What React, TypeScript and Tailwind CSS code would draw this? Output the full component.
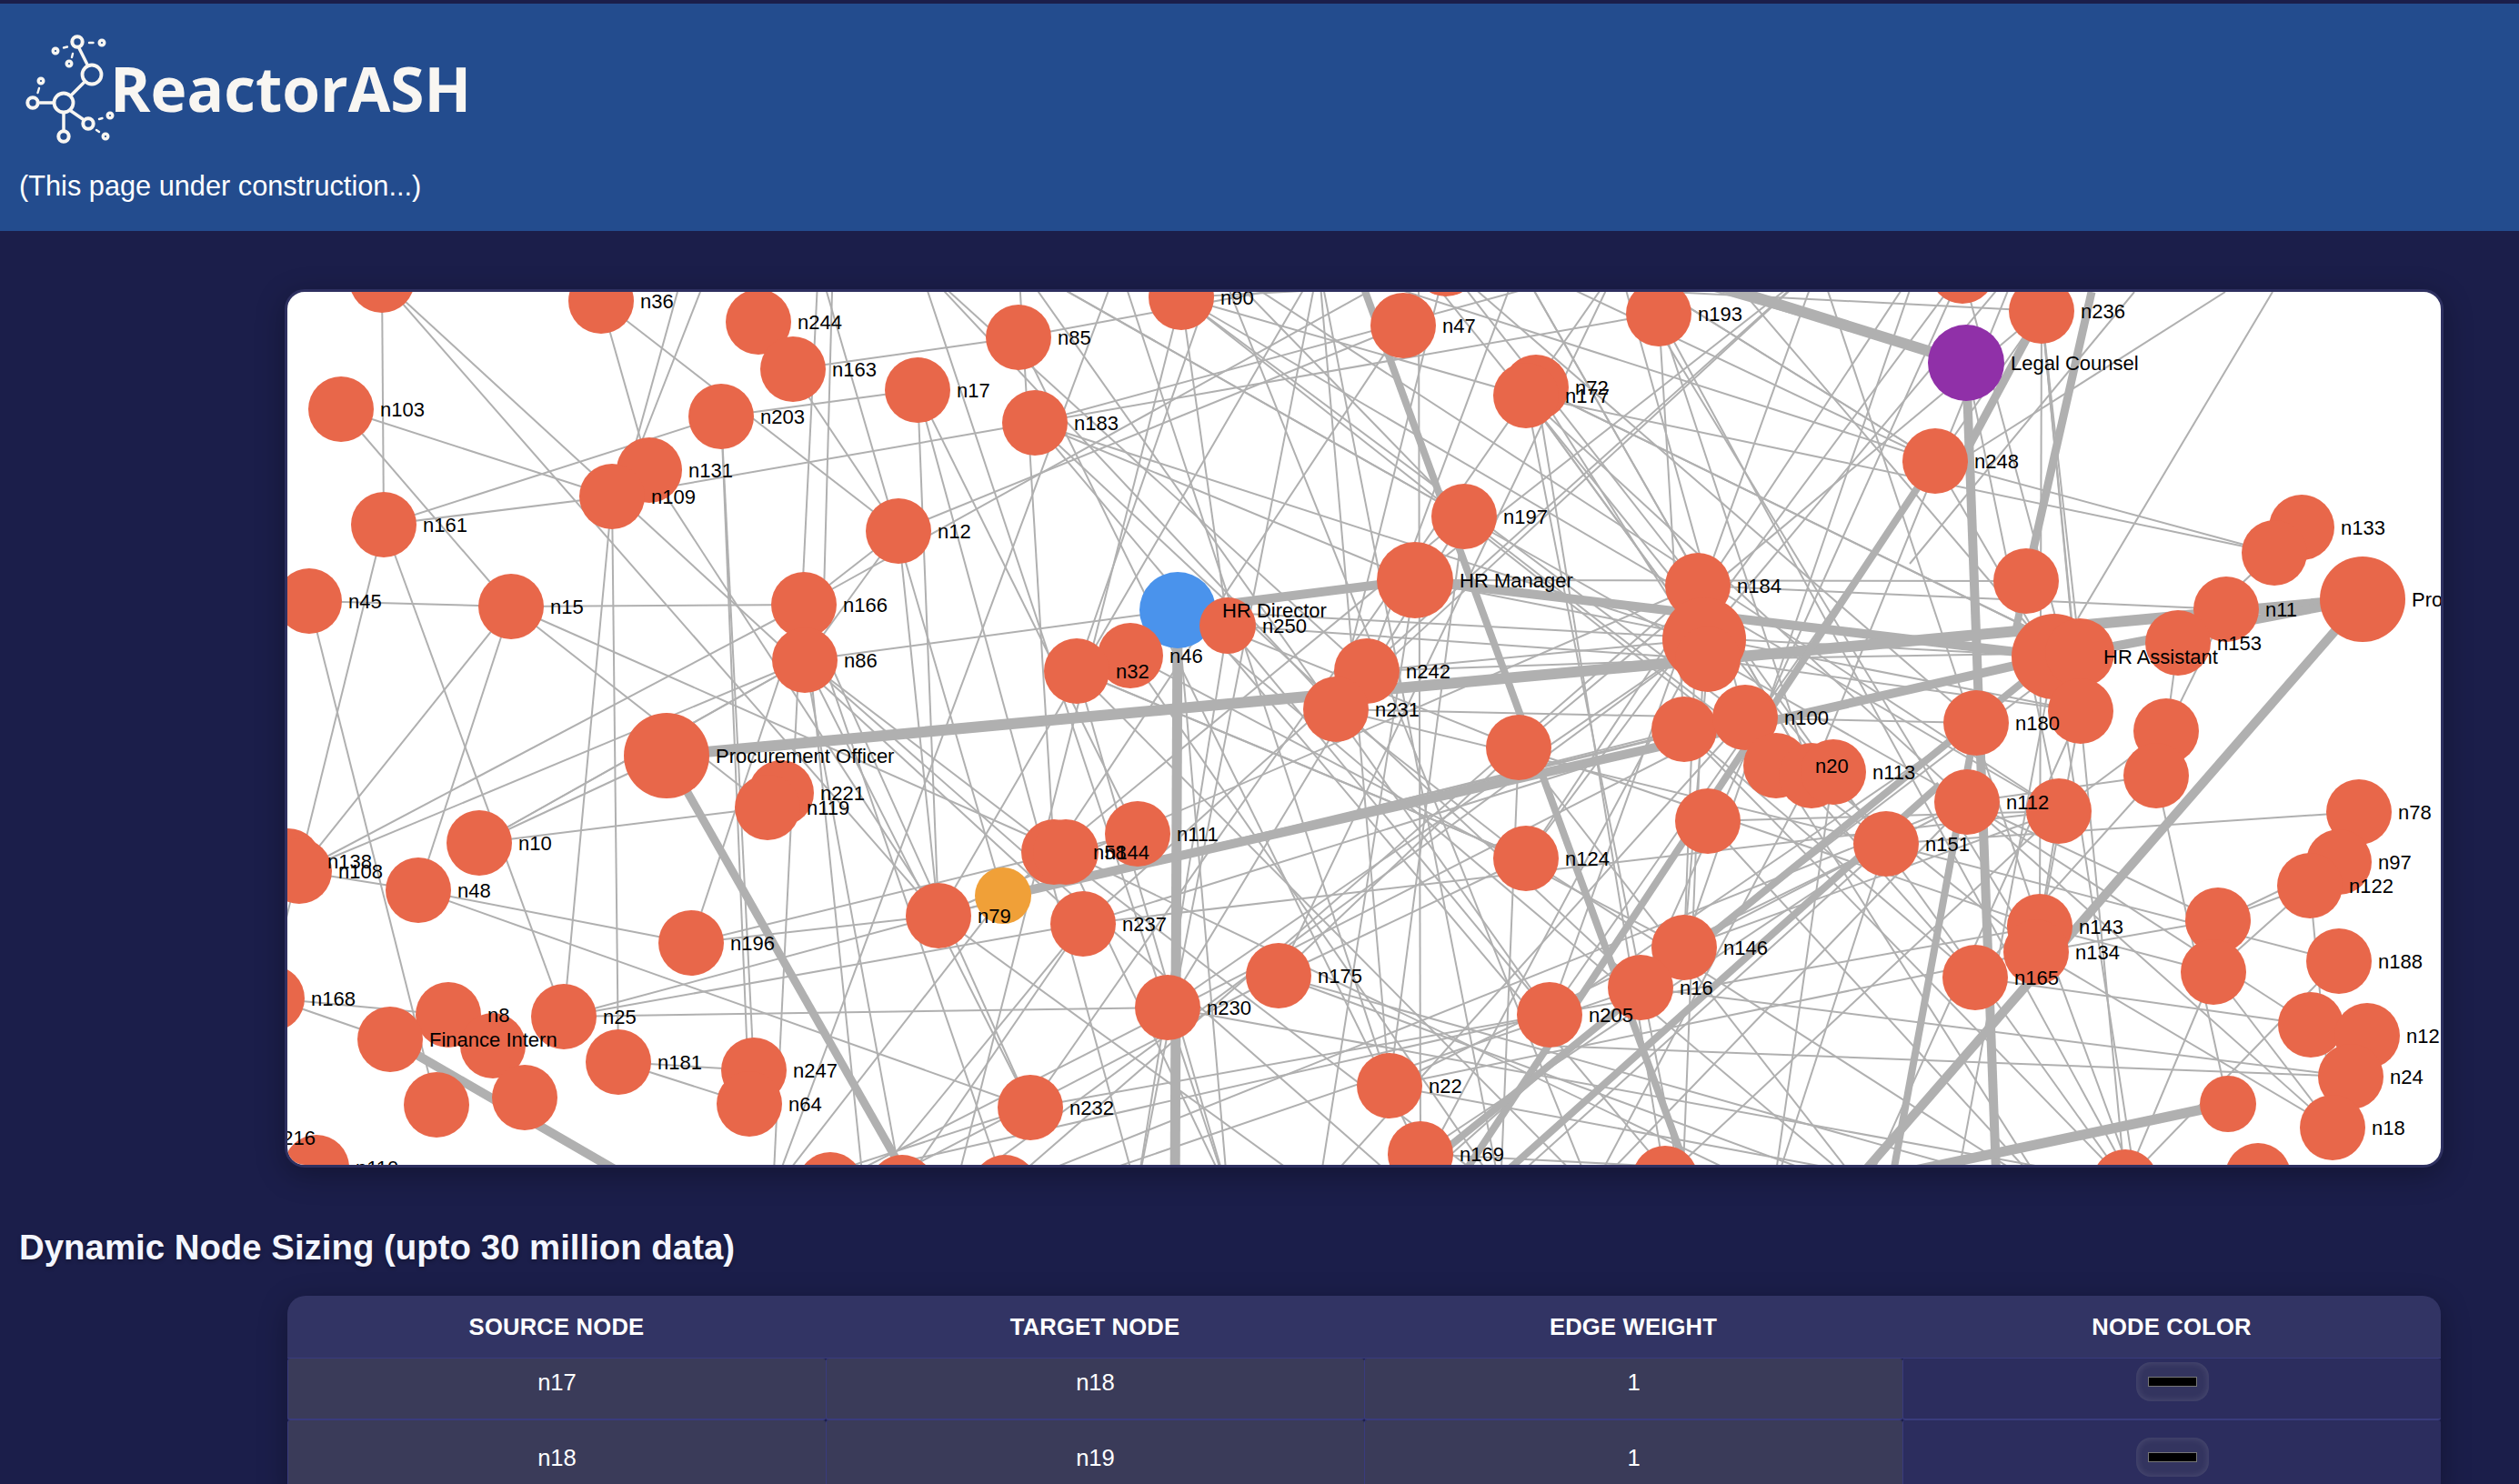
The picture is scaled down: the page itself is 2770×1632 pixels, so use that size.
import React from "react";

type GraphNode = { id: string; x: number; y: number; r?: number; color?: string; label?: string };

const ORANGE = "#e8674a";
const EDGE = "#b0b0b0";

const nodes: GraphNode[] = [
  { id: "u0", x: 420, y: 308 },
  { id: "n36", x: 661, y: 331 },
  { id: "n244", x: 834, y: 354 },
  { id: "n163", x: 872, y: 406 },
  { id: "n103", x: 375, y: 450 },
  { id: "n203", x: 793, y: 458 },
  { id: "n17", x: 1009, y: 429 },
  { id: "n131", x: 714, y: 517 },
  { id: "n109", x: 673, y: 546 },
  { id: "n161", x: 422, y: 577 },
  { id: "n12", x: 988, y: 584 },
  { id: "n45", x: 340, y: 661 },
  { id: "n15", x: 562, y: 667 },
  { id: "n166", x: 884, y: 665 },
  { id: "n86", x: 885, y: 726 },
  { id: "n85", x: 1120, y: 371 },
  { id: "n183", x: 1138, y: 465 },
  { id: "n90", x: 1299, y: 327 },
  { id: "n47", x: 1543, y: 358 },
  { id: "u1", x: 1590, y: 290 },
  { id: "n193", x: 1824, y: 345 },
  { id: "n72", x: 1689, y: 426 },
  { id: "n177", x: 1678, y: 435 },
  { id: "n197", x: 1610, y: 568 },
  { id: "hrm", x: 1556, y: 638, r: 42, label: "HR Manager" },
  { id: "n184", x: 1867, y: 644 },
  { id: "hrd", x: 1295, y: 671, r: 42, color: "#4a93ec", label: "HR Director" },
  { id: "n250", x: 1350, y: 688, r: 31 },
  { id: "n46", x: 1243, y: 721 },
  { id: "n32", x: 1184, y: 738 },
  { id: "n242", x: 1503, y: 738 },
  { id: "n231", x: 1469, y: 780 },
  { id: "u2", x: 1874, y: 703, r: 46 },
  { id: "u3", x: 1878, y: 725 },
  { id: "u4", x: 1670, y: 822 },
  { id: "u5", x: 1852, y: 802 },
  { id: "n100", x: 1919, y: 789 },
  { id: "u6", x: 2158, y: 298 },
  { id: "n236", x: 2245, y: 342 },
  { id: "legal", x: 2162, y: 399, r: 42, color: "#9030a8", label: "Legal Counsel" },
  { id: "n248", x: 2128, y: 507 },
  { id: "u7", x: 2228, y: 639 },
  { id: "n133", x: 2531, y: 580 },
  { id: "u8", x: 2501, y: 608 },
  { id: "pm", x: 2598, y: 659, r: 47, label: "Procurement Manager" },
  { id: "n11", x: 2448, y: 670 },
  { id: "n153", x: 2395, y: 707 },
  { id: "hra", x: 2259, y: 722, r: 47, label: "HR Assistant" },
  { id: "u9", x: 2287, y: 718, r: 38 },
  { id: "u10", x: 2288, y: 782 },
  { id: "n180", x: 2173, y: 795 },
  { id: "u11", x: 2382, y: 804 },
  { id: "u12", x: 2371, y: 853 },
  { id: "n20", x: 1953, y: 842 },
  { id: "u13", x: 1992, y: 853 },
  { id: "n113", x: 2016, y: 849 },
  { id: "n112", x: 2163, y: 882 },
  { id: "u14", x: 2264, y: 892 },
  { id: "n151", x: 2074, y: 928 },
  { id: "n78", x: 2594, y: 893 },
  { id: "n97", x: 2572, y: 948 },
  { id: "n122", x: 2540, y: 974 },
  { id: "n143", x: 2243, y: 1019 },
  { id: "n134", x: 2239, y: 1047 },
  { id: "n165", x: 2172, y: 1075 },
  { id: "u15", x: 2439, y: 1012 },
  { id: "u16", x: 2434, y: 1069 },
  { id: "n188", x: 2572, y: 1057 },
  { id: "u17", x: 2541, y: 1127 },
  { id: "n12x", x: 2603, y: 1139, label: "n12" },
  { id: "n24", x: 2585, y: 1184 },
  { id: "n18", x: 2565, y: 1240 },
  { id: "u18", x: 2450, y: 1214, r: 31 },
  { id: "u19", x: 2337, y: 1300 },
  { id: "u20", x: 2483, y: 1293 },
  { id: "n124", x: 1678, y: 944 },
  { id: "u21", x: 1878, y: 903 },
  { id: "n146", x: 1852, y: 1042 },
  { id: "n16", x: 1804, y: 1086 },
  { id: "n205", x: 1704, y: 1116 },
  { id: "n22", x: 1528, y: 1194 },
  { id: "n169", x: 1562, y: 1269 },
  { id: "u22", x: 1831, y: 1296 },
  { id: "n111", x: 1251, y: 917 },
  { id: "n58", x: 1159, y: 937 },
  { id: "n144", x: 1172, y: 937 },
  { id: "n237", x: 1191, y: 1016 },
  { id: "n175", x: 1406, y: 1073 },
  { id: "n230", x: 1284, y: 1108 },
  { id: "n232", x: 1133, y: 1218 },
  { id: "po", x: 733, y: 831, r: 47, label: "Procurement Officer" },
  { id: "n221", x: 859, y: 872 },
  { id: "n119", x: 844, y: 888 },
  { id: "n10", x: 527, y: 927 },
  { id: "n48", x: 460, y: 979 },
  { id: "n138", x: 317, y: 947 },
  { id: "n108", x: 329, y: 958 },
  { id: "n196", x: 760, y: 1037 },
  { id: "n79", x: 1032, y: 1007 },
  { id: "n79o", x: 1103, y: 985, r: 31, color: "#f0a038", label: "" },
  { id: "n168", x: 299, y: 1098 },
  { id: "n8", x: 493, y: 1116 },
  { id: "u23", x: 542, y: 1150 },
  { id: "fi", x: 429, y: 1143, label: "Finance Intern" },
  { id: "n25", x: 620, y: 1118 },
  { id: "n181", x: 680, y: 1168 },
  { id: "n247", x: 829, y: 1177 },
  { id: "n64", x: 824, y: 1214 },
  { id: "u24", x: 480, y: 1215 },
  { id: "u25", x: 577, y: 1207 },
  { id: "n216", x: 255, y: 1251 },
  { id: "n110", x: 348, y: 1284 },
  { id: "u26", x: 913, y: 1303 },
  { id: "u27", x: 992, y: 1306 },
  { id: "u28", x: 1105, y: 1306 },
];

const byId = Object.fromEntries(nodes.map((n) => [n.id, n]));

// the heavy links, read off the picture: x1, y1, x2, y2, width
const thickLines: number[][] = [
  [1295, 671, 1556, 638, 10],
  [1556, 638, 2259, 722, 10],
  [733, 831, 2598, 659, 12],
  [1295, 671, 1292, 1320, 11],
  [1105, 985, 2259, 722, 10],
  [2162, 399, 1700, 255, 12],
  [2162, 399, 2195, 1290, 10],
  [1490, 290, 1860, 1300, 8],
  [2245, 342, 2160, 500, 9],
  [2128, 507, 1610, 1290, 8],
  [2300, 321, 2228, 639, 9],
  [2228, 639, 2215, 700, 8],
  [2598, 659, 2040, 1300, 10],
  [2173, 795, 2080, 1300, 8],
  [2259, 722, 1550, 1296, 8],
  [2133, 863, 1649, 1295, 8],
  [429, 1143, 700, 1300, 10],
  [733, 831, 1000, 1300, 9],
  [2450, 1214, 1950, 1320, 11],
  [2287, 718, 2598, 659, 10],
];

// light links in the sparse left and right parts, kept by hand
const handLinks =
  "n103-n109 n103-n15 u0-n161 u0-n79 u0-n237 n161-n203 n161-n109 n109-n183 n45-n15 n15-n166 n166-n232 n163-n85 n203-n17 n36-n131 n36-n12 n244-n12 n10-n119 n48-n196 n48-n232 n10-po n108-n48 n108-n86 n108-n166 n108-n15 n168-n8 n168-fi n25-n79 n25-n237 n25-n230 n181-n247 n181-n64 n196-n79 n196-n111 n196-n166 n10-n86 n109-n181 n109-n25 n203-n247 n203-n64 n131-n79 n12-n86 n12-n166 n15-n119 n15-n144 n86-n10 n161-n25 n45-u24 n15-n48 n161-n216 n78-n151 n97-u15 n122-u15 n122-n18 n122-u16 u15-n134 u17-n165 n18-n134 u16-n18 u8-n248 n177-u8 n184-n11 u8-n153 n11-u11 n153-u11 u11-u14 u12-n112 u12-n165 u15-n112 u16-n143 n188-u19 n188-n151 n24-n16 u17-n112 u12-u18 u16-u19 n18-n112 u14-n143";

// the middle of the graph is a thick tangle, a seeded walk fills it in
const seededLinks = () => {
  let seed = 4711;
  const rnd = () => {
    seed = (seed * 16807) % 2147483647;
    return seed / 2147483647;
  };
  const pool: { x: number; y: number }[] = nodes.filter((n) => n.x > 880 && n.x < 2340);
  for (let x = 900; x <= 2300; x += 110) pool.push({ x, y: 290 });
  for (let x = 850; x <= 2400; x += 100) pool.push({ x, y: 1310 });
  const out: number[][] = [];
  while (out.length < 200) {
    const a = pool[Math.floor(rnd() * pool.length)];
    const b = pool[Math.floor(rnd() * pool.length)];
    const d = Math.hypot(a.x - b.x, a.y - b.y);
    if (d > 260 && d < 1150) out.push([a.x, a.y, b.x, b.y]);
  }
  return out;
};

const thinLines: number[][] = [
  ...handLinks.split(" ").map((pair) => {
    const [a, b] = pair.split("-");
    return [byId[a].x, byId[a].y, byId[b].x, byId[b].y];
  }),
  ...seededLinks(),
  [770, 321, 700, 500],
  [745, 321, 690, 520],
  [915, 321, 905, 690],
  [2499, 321, 2285, 680],
  [2447, 321, 2170, 497],
  [2347, 321, 2100, 620],
  [2585, 1184, 1700, 1150],
];

const rows = [
  { source: "n17", target: "n18", pad: "pt-[11px]", pillPad: "pt-1", h: "h-[68px]" },
  { source: "n18", target: "n19", pad: "pt-[26px]", pillPad: "pt-[19px]", h: "h-[82px]" },
];

const textCell = "rounded-[3px] border-b-2 border-l border-[#393b7d] bg-[#3a3b59] leading-[30px]";

function LogoMark() {
  const hollow = "fill-none stroke-[#f8f6f2]";
  return (
    <svg viewBox="24 38 104 122" className="h-[122px] w-[104px] shrink-0" strokeLinecap="round">
      <path
        d="M87 53L96 71M93 90L78 105M58 113H44M70 125V143M78 122L91 131"
        stroke="#f8f6f2"
        strokeWidth="3.5"
      />
      <path
        d="M70 52.5L74 51.5M80 59L79 63M98 47H102.5M43 97L41.5 102M109 131L112.5 130M106 143L109 145"
        stroke="#f8f6f2"
        strokeWidth="2.4"
      />
      <circle cx="101" cy="82" r="10.5" strokeWidth="3.8" className={hollow} />
      <circle cx="70" cy="113" r="10.5" strokeWidth="3.8" className={hollow} />
      <circle cx="85" cy="46" r="5.7" strokeWidth="4" className={hollow} />
      <circle cx="36" cy="113" r="5.7" strokeWidth="4" className={hollow} />
      <circle cx="70" cy="150" r="5.7" strokeWidth="4" className={hollow} />
      <circle cx="97" cy="136" r="5.7" strokeWidth="4" className={hollow} />
      <circle cx="61" cy="56" r="2.8" strokeWidth="3.4" className={hollow} />
      <circle cx="76" cy="70" r="2.8" strokeWidth="3.4" className={hollow} />
      <circle cx="112" cy="47" r="2.8" strokeWidth="3.4" className={hollow} />
      <circle cx="45" cy="89" r="2.8" strokeWidth="3.4" className={hollow} />
      <circle cx="121" cy="127" r="2.8" strokeWidth="3.4" className={hollow} />
      <circle cx="116" cy="150" r="2.8" strokeWidth="3.4" className={hollow} />
    </svg>
  );
}

function NetworkGraph() {
  return (
    <svg viewBox="316 321 2368 960" className="block h-[960px] w-[2368px]">
      <g stroke={EDGE} strokeWidth="2">
        {thinLines.map(([x1, y1, x2, y2], i) => (
          <line key={i} x1={x1} y1={y1} x2={x2} y2={y2} />
        ))}
      </g>
      <g stroke={EDGE}>
        {thickLines.map(([x1, y1, x2, y2, w], i) => (
          <line key={i} x1={x1} y1={y1} x2={x2} y2={y2} strokeWidth={w} />
        ))}
      </g>
      {nodes.map((n) => (
        <circle key={n.id} cx={n.x} cy={n.y} r={n.r ?? 36} fill={n.color ?? ORANGE} />
      ))}
      <g fill="#000" fontSize="22" fontFamily="'Liberation Sans', Arial, sans-serif">
        {nodes.map((n) => (
          <text key={n.id} x={n.x + (n.r ?? 36) + 7} y={n.y} dominantBaseline="central">
            {n.label ?? (n.id.startsWith("n") ? n.id : "")}
          </text>
        ))}
      </g>
    </svg>
  );
}

export default function App() {
  return (
    <div className="h-[1632px] overflow-hidden bg-[#1b1e4a] pt-1 font-['Liberation_Sans',Arial,sans-serif] text-white">
      <header className="h-[250px] bg-[#234c8e] pl-[21px] pt-[34px]">
        <div className="flex items-start">
          <div className="ml-[3px]">
            <LogoMark />
          </div>
          <span className="-ml-[7px] mt-[14px] font-['Open_Sans',sans-serif] text-[67.5px] font-bold leading-[90px] text-[#f8f6f2]">
            ReactorASH
          </span>
        </div>
        <p className="mt-[26px] text-[30.72px] leading-[37px]">(This page under construction...)</p>
      </header>

      <div className="ml-[313px] mt-16 w-[2374px] overflow-hidden rounded-[22px] border-[3px] border-[#2e3060] bg-white shadow-[0_8px_32px_rgba(0,0,0,0.3)]">
        <NetworkGraph />
      </div>

      <h2 className="ml-[21px] mt-[66px] text-[38.4px] font-bold leading-[44px] text-[#f4f6ff] [text-shadow:0_2px_4px_rgba(0,0,0,0.3)]">
        Dynamic Node Sizing (upto 30 million data)
      </h2>

      <div className="ml-[316px] mt-[31px] w-[2368px] overflow-hidden rounded-t-[20px] bg-[#1b1e4a] shadow-[0_8px_32px_rgba(0,0,0,0.3)]">
        <table className="w-full table-fixed border-separate border-spacing-0 text-[25.6px]">
          <thead>
            <tr className="h-[69px] text-center font-bold tracking-[0.2px]">
              <th className="border-b border-[#393b7d] bg-[#323464]">SOURCE NODE</th>
              <th className="border-b border-[#393b7d] bg-[#323464]">TARGET NODE</th>
              <th className="border-b border-[#393b7d] bg-[#323464]">EDGE WEIGHT</th>
              <th className="border-b border-[#393b7d] bg-[#323464]">NODE COLOR</th>
            </tr>
          </thead>
          <tbody>
            {rows.map((row) => (
              <tr key={row.source} className={`text-center align-top ${row.h}`}>
                <td className={`${textCell} ${row.pad}`}>{row.source}</td>
                <td className={`${textCell} ${row.pad}`}>{row.target}</td>
                <td className={`${textCell} ${row.pad}`}>1</td>
                <td className={`rounded-[3px] border-b-2 border-l border-[#393b7d] bg-[#2c2d5e] ${row.pillPad}`}>
                  <div className="mx-auto flex h-[43px] w-[80px] items-center justify-center rounded-[16px] bg-[#33345f] shadow-[inset_0_0_8px_rgba(255,255,255,0.14)]">
                    <div className="h-[11px] w-[54px] border border-[#777] bg-black" />
                  </div>
                </td>
              </tr>
            ))}
          </tbody>
        </table>
      </div>
    </div>
  );
}
